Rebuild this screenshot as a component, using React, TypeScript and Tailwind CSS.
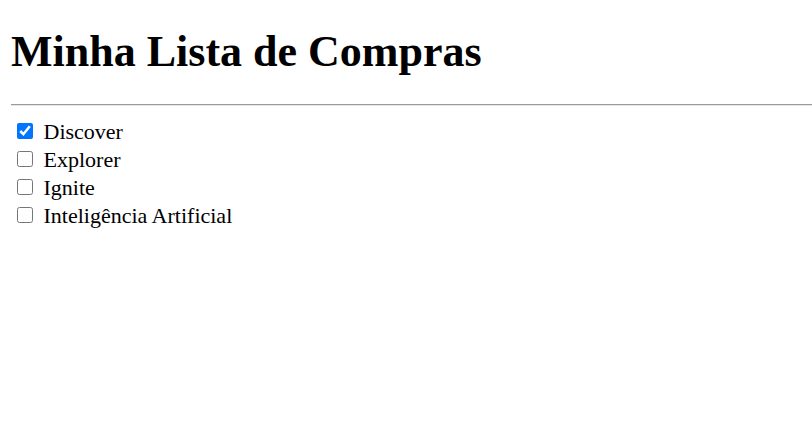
import React from "react";

const items = [
  { label: "Discover", checked: true },
  { label: "Explorer", checked: false },
  { label: "Ignite", checked: false },
  { label: "Inteligência Artificial", checked: false },
];

export default function App() {
  return (
    <div
      className="min-h-[437px] w-[812px] overflow-hidden bg-white text-black pl-[11px]"
      style={{ fontFamily: '"Liberation Serif", "Times New Roman", serif' }}
    >
      <h1 className="pt-[28px] text-[44px] leading-[48px] font-bold">Minha Lista de Compras</h1>
      <hr className="mt-[28px] h-0 border-0 border-t border-t-[#9a9a9a] border-b border-b-[#e6e6e6]" />
      <div className="pt-[11px]">
        {items.map((it) => (
          <div key={it.label} className="flex h-[28px] items-center text-[22px] leading-[28px]">
            <input
              type="checkbox"
              defaultChecked={it.checked}
              className="m-0 ml-[5.5px] h-[16px] w-[16px] shrink-0"
            />
            <span className="ml-[11px] pt-[2px]">{it.label}</span>
          </div>
        ))}
      </div>
    </div>
  );
}
